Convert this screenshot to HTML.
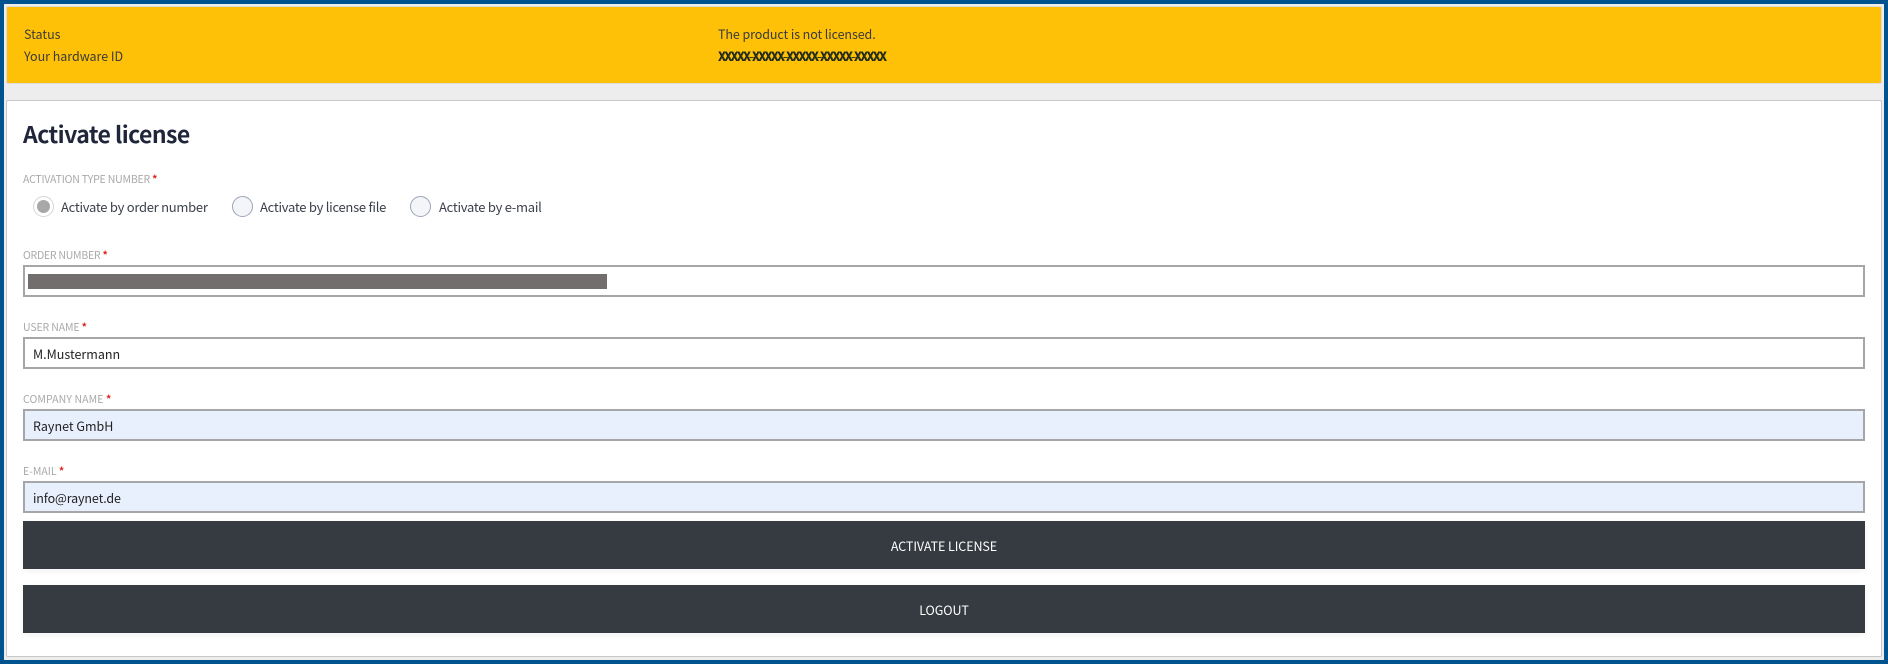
<!DOCTYPE html>
<html lang="en">
<head>
<meta charset="utf-8">
<title>Activate license</title>
<style>
html,body{margin:0;padding:0;width:1888px;height:664px;overflow:hidden;background:#00538f;}
*{box-sizing:border-box;}
body{font-family:"Noto Sans CJK JP","Liberation Sans",sans-serif;position:relative;}
.abs{position:absolute;}
.t{position:absolute;white-space:nowrap;line-height:20px;height:20px;}
#bg{left:4px;top:4px;width:1880px;height:656px;background:#ededed;}
#status{left:6px;top:6px;width:1876px;height:78px;background:#ffc107;border:1px solid #dcdcdc;border-radius:2px;}
#card{left:6px;top:100px;width:1876px;height:557px;background:#fff;border:1px solid #c8c8c8;border-radius:2px;}
.s{font-size:12.5px;color:#3a3a3a;}
.lab{font-size:10.5px;color:#a9a9a9;}
.lab b{color:#e02020;font-weight:700;}
.inp{position:absolute;left:23px;width:1842px;height:32px;border:2px solid #a6a6a9;background:#fff;}
.blue{background:#e8f0fe;}
.val{font-size:12.5px;color:#222;}
.btn{position:absolute;left:23px;width:1842px;height:48px;background:#363a41;box-shadow:0 2px 6px rgba(0,0,0,.06);color:#fff;font-size:12.5px;text-align:center;line-height:50px;letter-spacing:-.08px;}
.r{position:absolute;width:21px;height:21px;border-radius:50%;border:1.5px solid #9ba5ba;background:#f4f5f8;top:196px;}
.rl{font-size:13px;color:#3b3f4c;letter-spacing:-.27px;}
.hw{font-size:12.5px;letter-spacing:-.9px;}
</style>
</head>
<body>
<div class="abs" id="bg"></div>
<div class="abs" id="status"></div>
<div class="abs" id="card"></div>

<div class="t s" style="left:24px;top:24px;">Status</div>
<div class="t s" style="left:24px;top:46px;letter-spacing:-.03px;">Your hardware ID</div>
<div class="t s" style="left:718px;top:24px;letter-spacing:-.09px;">The product is not licensed.</div>
<div class="t hw" style="left:718px;top:46px;color:#111;">XXXXX-XXXXX-XXXXX-XXXXX-XXXXX</div>
<div class="t hw" style="left:719px;top:46px;color:#2a3a20;">XXXXX-XXXXX-XXXXX-XXXXX-XXXXX</div>

<div class="t" style="left:23px;top:117px;height:32px;line-height:32px;font-size:23px;font-weight:700;color:#20263a;letter-spacing:-.55px;">Activate license</div>

<div class="t lab" style="left:23px;top:170px;letter-spacing:-.19px;">ACTIVATION TYPE NUMBER <b>*</b></div>

<div class="r" style="left:33px;border-color:#d6d6d6;background:#fff;"></div>
<div class="abs" style="left:37px;top:200px;width:13px;height:13px;border-radius:50%;background:#a8a8a8;"></div>
<div class="t rl" style="left:61px;top:197px;">Activate by order number</div>
<div class="r" style="left:232px;"></div>
<div class="t rl" style="left:260px;top:197px;">Activate by license file</div>
<div class="r" style="left:410px;"></div>
<div class="t rl" style="left:439px;top:197px;">Activate by e-mail</div>

<div class="t lab" style="left:23px;top:246px;letter-spacing:-.25px;">ORDER NUMBER <b>*</b></div>
<div class="inp" style="top:265px;"></div>
<div class="abs" style="left:28px;top:274px;width:579px;height:15px;background:#736e6e;"></div>

<div class="t lab" style="left:23px;top:318px;letter-spacing:-.13px;">USER NAME <b>*</b></div>
<div class="inp" style="top:337px;"></div>
<div class="t val" style="left:33px;top:344px;">M.Mustermann</div>

<div class="t lab" style="left:23px;top:390px;letter-spacing:.1px;">COMPANY NAME <b>*</b></div>
<div class="inp blue" style="top:409px;"></div>
<div class="t val" style="left:33px;top:416px;">Raynet GmbH</div>

<div class="t lab" style="left:23px;top:462px;">E-MAIL <b>*</b></div>
<div class="inp blue" style="top:481px;"></div>
<div class="t val" style="left:33px;top:488px;letter-spacing:-.13px;">info@raynet.de</div>

<div class="btn" style="top:521px;">ACTIVATE LICENSE</div>
<div class="btn" style="top:585px;">LOGOUT</div>
</body>
</html>
